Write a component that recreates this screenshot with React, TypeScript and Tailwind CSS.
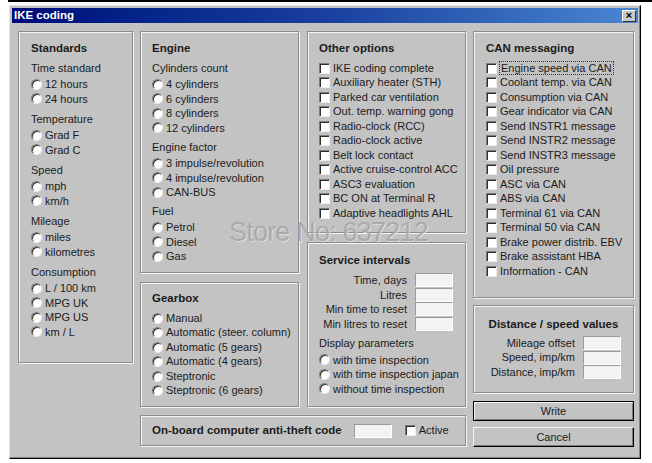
import React from 'react';
import clsx from 'clsx';

type Props = { children?: React.ReactNode; className?: string };

// Etched group frame, classic dialog style
const Group = ({ className, children }: Props) => (
  <div
    className={clsx(
      'box-border border border-[#8c8c8c] shadow-[1px_1px_0_#f4f4f4,inset_1px_1px_0_#f4f4f4]',
      className
    )}
  >
    {children}
  </div>
);

const Title = ({ className, children }: Props) => (
  <div className={clsx('h-[14px] flex items-center text-[11.5px] font-bold', className)}>{children}</div>
);

const Label = ({ className, children }: Props) => (
  <div className={clsx('h-[15px] flex items-center', className)}>{children}</div>
);

const Radio = () => (
  <span className="box-border shrink-0 w-[11px] h-[11px] rounded-full bg-white border border-t-[#7c7c7c] border-l-[#7c7c7c] border-r-[#ececec] border-b-[#ececec] shadow-[inset_1px_1px_0_#2e2e2e]" />
);

const Check = () => (
  <span className="box-border shrink-0 w-[11px] h-[11px] bg-white border border-t-[#7c7c7c] border-l-[#7c7c7c] border-r-[#ececec] border-b-[#ececec] shadow-[inset_1px_1px_0_#2e2e2e]" />
);

const RadioRow = ({ children }: Props) => (
  <div className="h-[14.5px] flex items-center gap-[3px]">
    <Radio />
    <span className="whitespace-nowrap">{children}</span>
  </div>
);

const CheckRow = ({ children }: Props) => (
  <div className="h-[14.5px] flex items-center gap-[3px]">
    <Check />
    <span className="whitespace-nowrap">{children}</span>
  </div>
);

const Field = () => (
  <span className="box-border block w-[38px] h-[14px] bg-[#f3f3f3] border border-t-[#9a9a9a] border-l-[#9a9a9a] border-r-white border-b-white" />
);

const FieldRow = ({ children }: Props) => (
  <div className="h-[14.5px] flex items-center justify-end gap-[8px]">
    <span className="whitespace-nowrap">{children}</span>
    <Field />
  </div>
);

// A caption followed by its radio options
const RadioSet = ({ label, items, className }: { label: string; items: string[]; className?: string }) => (
  <div className={className}>
    <Label>{label}</Label>
    <div className="mt-[1.5px]">
      {items.map((item) => (
        <RadioRow key={item}>{item}</RadioRow>
      ))}
    </div>
  </div>
);

const otherOptions = [
  'IKE coding complete',
  'Auxiliary heater (STH)',
  'Parked car ventilation',
  'Out. temp. warning gong',
  'Radio-clock (RCC)',
  'Radio-clock active',
  'Belt lock contact',
  'Active cruise-control ACC',
  'ASC3 evaluation',
  'BC ON at Terminal R',
  'Adaptive headlights AHL',
];

const canItems = [
  'Coolant temp. via CAN',
  'Consumption via CAN',
  'Gear indicator via CAN',
  'Send INSTR1 message',
  'Send INSTR2 message',
  'Send INSTR3 message',
  'Oil pressure',
  'ASC via CAN',
  'ABS via CAN',
  'Terminal 61 via CAN',
  'Terminal 50 via CAN',
  'Brake power distrib. EBV',
  'Brake assistant HBA',
  'Information - CAN',
];

export default function App() {
  return (
    <div className="min-h-screen bg-white font-['Liberation_Sans',Arial,sans-serif] text-[11px] text-[#1b1b1b]">
      <div className="ml-[8px] h-[2px] bg-black" />

      {/* Dialog window */}
      <div className="relative box-border ml-[9px] mt-[3px] w-[632px] h-[454px] bg-[#c3c3c3] border border-t-[#e2e2e2] border-l-[#e2e2e2] border-r-black border-b-black shadow-[inset_-1px_-1px_0_#808080] p-[2px]">
        {/* Title bar */}
        <div className="h-[15px] flex items-center justify-between bg-gradient-to-r from-[#000a7a] via-[#1a3f9e] to-[#4a86d2] pl-[2px] pr-[2px]">
          <span className="text-white font-bold text-[11.5px]">IKE coding</span>
          <span className="box-border w-[14px] h-[12px] flex items-center justify-center bg-[#c8c8c8] border border-t-white border-l-white border-r-[#333] border-b-[#333] text-black text-[11px] font-bold leading-none">
            ×
          </span>
        </div>

        <div className="flex pt-[8px] pl-[6px]">
          {/* Standards */}
          <Group className="w-[115px] h-[332px] pt-[10px] pl-[12px]">
            <Title>Standards</Title>
            <RadioSet className="mt-[4.5px]" label="Time standard" items={['12 hours', '24 hours']} />
            <RadioSet className="mt-[5.5px]" label="Temperature" items={['Grad F', 'Grad C']} />
            <RadioSet className="mt-[5.5px]" label="Speed" items={['mph', 'km/h']} />
            <RadioSet className="mt-[5.5px]" label="Mileage" items={['miles', 'kilometres']} />
            <RadioSet className="mt-[5.5px]" label="Consumption" items={['L / 100 km', 'MPG UK', 'MPG US', 'km / L']} />
          </Group>

          {/* Middle block */}
          <div className="ml-[7px] w-[326px] flex flex-col">
            <div className="flex gap-[8px]">
              <div className="w-[159px] flex flex-col">
                <Group className="h-[242px] pt-[10px] pl-[11px]">
                  <Title>Engine</Title>
                  <RadioSet
                    className="mt-[4.5px]"
                    label="Cylinders count"
                    items={['4 cylinders', '6 cylinders', '8 cylinders', '12 cylinders']}
                  />
                  <RadioSet
                    className="mt-[4.5px]"
                    label="Engine factor"
                    items={['3 impulse/revolution', '4 impulse/revolution', 'CAN-BUS']}
                  />
                  <RadioSet className="mt-[4px]" label="Fuel" items={['Petrol', 'Diesel', 'Gas']} />
                </Group>
                <Group className="mt-[9px] h-[125px] pt-[9px] pl-[11px]">
                  <Title>Gearbox</Title>
                  <div className="mt-[4.75px]">
                    {[
                      'Manual',
                      'Automatic (steer. column)',
                      'Automatic (5 gears)',
                      'Automatic (4 gears)',
                      'Steptronic',
                      'Steptronic (6 gears)',
                    ].map((g) => (
                      <RadioRow key={g}>{g}</RadioRow>
                    ))}
                  </div>
                </Group>
              </div>

              <div className="w-[159px] flex flex-col">
                <Group className="h-[202px] pt-[10px] pl-[11px]">
                  <Title>Other options</Title>
                  <div className="mt-[4.75px]">
                    {otherOptions.map((o) => (
                      <CheckRow key={o}>{o}</CheckRow>
                    ))}
                  </div>
                </Group>
                <Group className="mt-[9px] h-[165px] pt-[11px] pl-[11px]">
                  <Title>Service intervals</Title>
                  <div className="mt-[5px] pr-[12px]">
                    <FieldRow>Time, days</FieldRow>
                    <FieldRow>Litres</FieldRow>
                    <FieldRow>Min time to reset</FieldRow>
                    <FieldRow>Min litres to reset</FieldRow>
                  </div>
                  <RadioSet
                    className="mt-[5px]"
                    label="Display parameters"
                    items={['with time inspection', 'with time inspection japan', 'without time inspection']}
                  />
                </Group>
              </div>
            </div>

            {/* Anti-theft code */}
            <Group className="mt-[8px] h-[31px] flex items-center pl-[11px]">
              <span className="text-[11.5px] font-bold whitespace-nowrap">On-board computer anti-theft code</span>
              <span className="ml-[12px]">
                <Field />
              </span>
              <span className="ml-[13px] flex items-center gap-[3px]">
                <Check />
                Active
              </span>
            </Group>
          </div>

          {/* Right column */}
          <div className="ml-[7px] w-[161px] flex flex-col">
            <Group className="h-[267px] pt-[10px] pl-[12px]">
              <Title>CAN messaging</Title>
              <div className="mt-[4.75px]">
                <div className="h-[14.5px] flex items-center gap-[2px]">
                  <Check />
                  <span className="whitespace-nowrap border border-dotted border-[#333] px-[1px] leading-[12px]">
                    Engine speed via CAN
                  </span>
                </div>
                {canItems.map((c) => (
                  <CheckRow key={c}>{c}</CheckRow>
                ))}
              </div>
            </Group>

            <Group className="mt-[7px] h-[88px] pt-[12px]">
              <Title className="justify-center">Distance / speed values</Title>
              <div className="mt-[3.75px] pr-[12px]">
                <FieldRow>Mileage offset</FieldRow>
                <FieldRow>Speed, imp/km</FieldRow>
                <FieldRow>Distance, imp/km</FieldRow>
              </div>
            </Group>

            <button className="box-border mt-[8px] h-[20px] w-full border border-black bg-[#c3c3c3] shadow-[inset_1px_1px_0_#f4f4f4,inset_-1px_-1px_0_#7a7a7a] text-[11px]">
              Write
            </button>
            <button className="box-border mt-[6px] h-[20px] w-full border border-t-[#f4f4f4] border-l-[#f4f4f4] border-r-black border-b-black bg-[#c3c3c3] shadow-[inset_-1px_-1px_0_#7a7a7a] text-[11px]">
              Cancel
            </button>
          </div>
        </div>

        {/* Store watermark */}
        <div className="pointer-events-none absolute left-[219px] top-[216px] text-[27px] leading-[21px] tracking-[-0.8px] text-[#a4a4a4]/85 [text-shadow:1px_1px_0_rgba(235,235,235,0.6)] whitespace-nowrap">
          Store No: 637212
        </div>
      </div>
    </div>
  );
}
